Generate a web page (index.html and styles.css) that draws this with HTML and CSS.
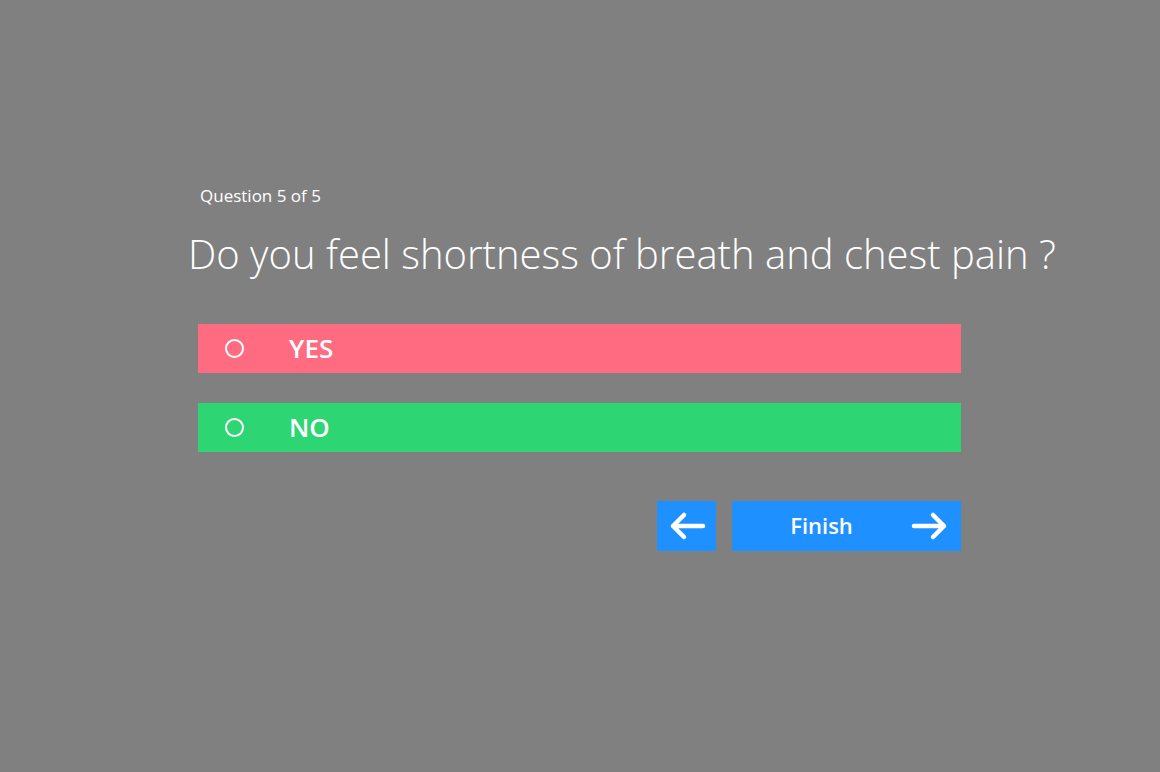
FILE: index.html
```html
<!DOCTYPE html>
<html>
<head>
<meta charset="utf-8">
<link rel="stylesheet" href="styles.css">
</head>
<body>
<main class="quiz">
  <div class="counter">Question 5 of 5</div>
  <h1 class="question">Do you feel shortness of breath and chest pain ?</h1>
  <div class="options">
    <label class="option option-yes"><span class="radio"></span><span class="option-text">YES</span></label>
    <label class="option option-no"><span class="radio"></span><span class="option-text">NO</span></label>
  </div>
  <div class="nav">
    <button class="btn btn-back" aria-label="Back">
      <svg width="38" height="30" viewBox="0 0 38 30"><path d="M35 15H5M16 4L5 15l11 11" fill="none" stroke="#fff" stroke-width="4.5" stroke-linecap="round" stroke-linejoin="round"/></svg>
    </button>
    <button class="btn btn-finish"><span class="finish-label">Finish</span>
      <svg class="finish-arrow" width="38" height="30" viewBox="0 0 38 30"><path d="M3 15h30M22 4l11 11-11 11" fill="none" stroke="#fff" stroke-width="4.5" stroke-linecap="round" stroke-linejoin="round"/></svg>
    </button>
  </div>
</main>
</body>
</html>
```
FILE: styles.css
```css
html, body {
  margin: 0;
  padding: 0;
  background: #808080;
  height: 100%;
}
body {
  font-family: "Open Sans", "Noto Sans", sans-serif;
  color: #fff;
}
.quiz {
  width: 763px;
  margin-left: 198px;
  padding-top: 184px;
}
.counter {
  font-size: 17px;
  padding-left: 2px;
  line-height: 24px;
}
.question {
  margin: 18px 0 0 -10px;
  font-weight: 300;
  font-size: 40px;
  line-height: 56px;
  white-space: nowrap;
}
.options {
  margin-top: 42px;
  display: flex;
  flex-direction: column;
  gap: 30px;
}
.option {
  display: flex;
  align-items: center;
  height: 49px;
}
.option-yes { background: #ff6b81; }
.option-no { background: #2ed573; }
.radio {
  width: 15px;
  height: 15px;
  border: 2px solid #fff;
  border-radius: 50%;
  margin-left: 27px;
  box-sizing: content-box;
}
.option-text {
  margin-left: 45px;
  font-size: 26px;
  font-weight: 600;
  padding-bottom: 2px;
}
.nav {
  margin-top: 49px;
  display: flex;
  justify-content: flex-end;
  gap: 16px;
}
.btn {
  border: 0;
  background: #1e90ff;
  color: #fff;
  height: 50px;
  padding: 0;
  font-family: inherit;
  display: flex;
  align-items: center;
  justify-content: center;
}
.btn-back { width: 59px; }
.btn-finish {
  width: 229px;
  padding-right: 50px;
  padding-bottom: 3px;
  box-sizing: border-box;
  position: relative;
  font-size: 22px;
  font-weight: 600;
}
.finish-arrow {
  position: absolute;
  right: 12px;
  top: 10px;
}
```
